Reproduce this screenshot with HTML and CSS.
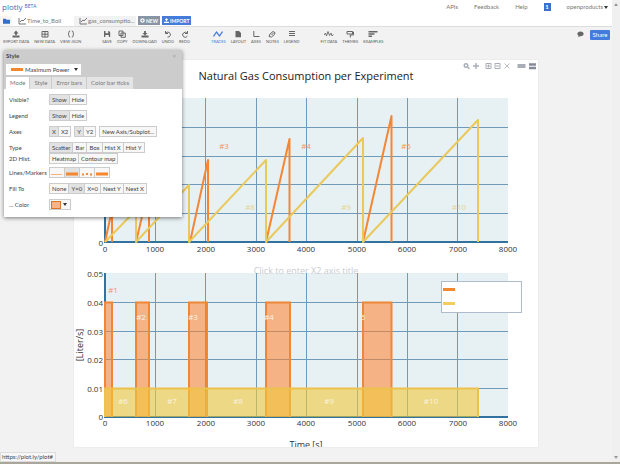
FILE: index.html
```html
<!doctype html>
<html lang="en">
<head>
    <meta charset="UTF-8">
    <meta name="viewport" content="width=device-width, initial-scale=1.0">
    <title>plotly</title>
    <link rel="stylesheet" href="styles.css">
</head>
<body>
<div class="screen">
<div class="app">
    <header class="header">
        <a class="logo" href="#">plotly<span class="beta">BETA</span></a>
        <nav class="nav">
            <a href="#">APIs</a>
            <a href="#">Feedback</a>
            <a href="#">Help</a>
            <a class="badge" href="#">1</a>
            <a class="user" href="#">openproducts<span class="caret"></span></a>
        </nav>
    </header>
    <div class="tabs">
        <button class="folder" aria-label="Files"><svg viewBox="0 0 8 6"><path d="M0 0.5h3l1 1h4V6H0z" fill="#2f6fd0"/></svg></button>
        <button class="tab"><svg viewBox="0 0 8 8"><path d="M1 1v6h7M2 5l2-2 1 1 3-3" fill="none" stroke="#777"/></svg>Time_to_Boil</button>
        <button class="tab active"><svg viewBox="0 0 8 8"><path d="M1 1v6h7M2 5l2-2 1 1 3-3" fill="none" stroke="#777"/></svg>gas_consumptio...</button>
        <button class="top-btn grey"><svg viewBox="0 0 6 6"><path d="M3 0a3 3 0 1 0 .01 0zM1.5 3h3M3 1.5v3" fill="#fff" stroke="#8a93a3" stroke-width=".8"/></svg>NEW</button>
        <button class="top-btn"><svg viewBox="0 0 6 6"><path d="M3 0l2 2.4H3.8V4H2.2V2.4H1zM0 4.5h6V6H0z" fill="#fff"/></svg>IMPORT</button>
    </div>
    <div class="toolbar">
        <div class="group">
            <button><svg viewBox="0 0 8 8"><path d="M4 .5L6.5 3.5h-1.6V5H3.1V3.5H1.5zM.5 5.5h7v2h-7z" fill="#666"/></svg>IMPORT DATA</button>
            <button><svg viewBox="0 0 8 8"><path d="M1 1.5h6v5.5H1zM1 4.2h6M4 1.5V7" fill="none" stroke="#666"/></svg>NEW DATA</button>
            <button><svg viewBox="0 0 8 8"><path d="M3.2 1Q1.7 1 1.8 2.5T1 4q.9 0 .8 1.5T3.2 7M4.8 1q1.5 0 1.4 1.5T7 4q-.9 0-.8 1.5T4.8 7" fill="none" stroke="#666"/></svg>VIEW JSON</button>
        </div>
        <div class="group">
            <button><svg viewBox="0 0 8 8"><path d="M1 1h5l1.2 1.2V7H1zM2.5 1v2.3h2.7V1M2.3 5h3.5v2H2.3z" fill="#666" fill-rule="evenodd"/></svg>SAVE</button>
            <button><svg viewBox="0 0 8 8"><path d="M1 1h4v4.5H1zM3 3h4.3v4.3H3z" fill="#f2f2f2" stroke="#666"/></svg>COPY</button>
            <button><svg viewBox="0 0 8 8"><path d="M3.1 1h1.8v2h1.6L4 5.6 1.5 3h1.6zM.5 5.5h7v2h-7z" fill="#666"/></svg>DOWNLOAD</button>
            <button><svg viewBox="0 0 8 8"><path d="M1.5 1v2.5h2.5M1.8 3.3a2.5 2.5 0 1 1 1.7 3.8" fill="none" stroke="#666"/></svg>UNDO</button>
            <button><svg viewBox="0 0 8 8"><path d="M6.5 1v2.5H4M6.2 3.3A2.5 2.5 0 1 0 6.4 6" fill="none" stroke="#666"/></svg>REDO</button>
        </div>
        <div class="group">
            <button class="on"><svg viewBox="0 0 10 8"><path d="M.5 6.5L3.5 2l3 4 3-4.5" fill="none" stroke="#447bdc" stroke-width="1.3"/></svg>TRACES</button>
            <button><svg viewBox="0 0 8 8"><path d="M1.5 1H5l2 2v4.2H1.5z" fill="#666"/></svg>LAYOUT</button>
            <button><svg viewBox="0 0 8 8"><path d="M1.8 1v5.5h5.7" fill="none" stroke="#666"/></svg>AXES</button>
            <button><svg viewBox="0 0 8 8"><path d="M1 6.5L2 4l3-2.5 2 1.2-.5 1.8-3 2.5zM3.5 5l2-2" fill="none" stroke="#666"/></svg>NOTES</button>
            <button><svg viewBox="0 0 8 8"><path d="M1 1.5h6M1 3.5h6M1 5.500h6" stroke="#666"/></svg>LEGEND</button>
        </div>
        <div class="group">
            <button><svg viewBox="0 0 10 8"><path d="M0 5l1.5-2 1 3 1.5-4.5 1.5 4L7 3l1 3 1.5-1.5" fill="none" stroke="#666" stroke-width=".9"/></svg>FIT DATA</button>
            <button><svg viewBox="0 0 8 8"><path d="M1 1.5h5.5V4H1zM6.5 2h1v3H4.3v2.5" fill="none" stroke="#666"/></svg>THEMES</button>
            <button><svg viewBox="0 0 10 8"><path d="M.5 1.7h9M.5 4h6M.5 6.3h3.5" stroke="#666" stroke-width="1.4"/></svg>EXAMPLES</button>
        </div>
        <div class="share">
            <svg viewBox="0 0 8 8"><path d="M4 1C1.8 1 .4 2.2.4 3.8c0 1 .6 1.8 1.5 2.3L1.5 7.7l2-1.2H4c2.2 0 3.6-1.2 3.6-2.7S6.2 1 4 1z" fill="#666"/></svg>
            <button class="share-btn">Share</button>
        </div>
    </div>

    <main class="workspace">
        <div class="plot">
            <svg viewBox="0 0 464 387">
                <!-- modebar -->
                <g fill="none" stroke="#a9adb8">
                    <circle cx="392" cy="5.5" r="1.8" stroke-width="1.4"/>
                    <path d="M393.500 7l2 2" stroke-width="1.3"/>
                    <path d="M402 3v6M399 6h6" stroke-width="1.4"/>
                    <path d="M412 3.5h5v5h-5zM413 6h3M414.5 4.5v3M421 3.5h5v5h-5zM422 6h3"/>
                    <path d="M430.5 3.5l5 5M435.5 3.5l-5 5" stroke-width=".8"/>
                    <path d="M443.5 6h8" stroke-width="4"/>
                    <path d="M455 4.5h7M455 8h7" stroke="#858b99" stroke-width="2.5"/>
                </g>
                <text class="title" x="232" y="20">Natural Gas Consumption per Experiment</text>

                <!-- upper plot -->
                <rect class="bg" x="31" y="38" width="403" height="144"/>
                <path class="grid" d="M81.5 38v144M131.5 38v144M182.5 38v144M232.5 38v144M283.5 38v144M333.5 38v144M383.5 38v144M31 67.5h403M31 96.5h403M31 124.5h403M31 153.5h403"/>
                <path class="axis" d="M31 38v144M30 182h404"/>
                <path class="orange" d="M31 182l7-32v32M62 182l13-55v55M116 182l18-82v82M192 182l23.5-103v103M289 182l28.500-126v126"/>
                <path class="yellow" d="M31 182l31-32v32l53-57v57l77-82v82l97-104v104l115-122v122"/>
                <g class="mark-orange">
                    <text x="150" y="89">#3</text>
                    <text x="232" y="89">#4</text>
                    <text x="332" y="89">#5</text>
                </g>
                <g class="mark-yellow">
                    <text x="176" y="150">#8</text>
                    <text x="272" y="150">#9</text>
                    <text x="385" y="150">#10</text>
                </g>
                <g class="tick">
                    <text x="31" y="192">0</text>
                    <text x="81" y="192">1000</text>
                    <text x="132" y="192">2000</text>
                    <text x="182" y="192">3000</text>
                    <text x="232" y="192">4000</text>
                    <text x="283" y="192">5000</text>
                    <text x="333" y="192">6000</text>
                    <text x="384" y="192">7000</text>
                    <text x="434" y="192">8000</text>
                </g>
                <text class="tick-y" x="29" y="186">0</text>

                <!-- lower plot -->
                <rect class="bg" x="31" y="213" width="403" height="144"/>
                <text class="hint" x="232" y="214">Click to enter X2 axis title</text>
                <path class="grid" d="M81.5 213v144M131.5 213v144M182.5 213v144M232.5 213v144M283.5 213v144M333.5 213v144M383.5 213v144M31 242.5h403M31 271.5h403M31 299.5h403M31 328.5h403"/>
                <path class="axis" d="M31 213v144M30 357h404"/>
                <path class="bar-orange" d="M31 357V242.5h7V357M62 357V242.5h13V357M115 357V242.5h18V357M192 357V242.5h24V357M289 357V242.5h28.5V357"/>
                <path class="bar-yellow" d="M31 357V328.5h373V357"/>
                <g class="mark-orange"><text x="39" y="233">#1</text></g>
                <g class="mark-white">
                    <text x="67" y="260">#2</text>
                    <text x="119" y="260">#3</text>
                    <text x="195" y="260">#4</text>
                    <text x="289" y="260">5</text>
                    <text x="49" y="344">#6</text>
                    <text x="98" y="344">#7</text>
                    <text x="164" y="344">#8</text>
                    <text x="255" y="344">#9</text>
                    <text x="357" y="344">#10</text>
                </g>
                <g class="tick-y">
                    <text x="29" y="217">0.05</text>
                    <text x="29" y="246">0.04</text>
                    <text x="29" y="275">0.03</text>
                    <text x="29" y="303">0.02</text>
                    <text x="29" y="332">0.01</text>
                    <text x="29" y="360">0</text>
                </g>
                <g class="tick">
                    <text x="31" y="366">0</text>
                    <text x="81" y="366">1000</text>
                    <text x="132" y="366">2000</text>
                    <text x="182" y="366">3000</text>
                    <text x="232" y="366">4000</text>
                    <text x="283" y="366">5000</text>
                    <text x="333" y="366">6000</text>
                    <text x="384" y="366">7000</text>
                    <text x="434" y="366">8000</text>
                </g>
                <text class="axis-title" transform="translate(9 285) rotate(-90)">[Liter/s]</text>
                <text class="axis-title" x="232" y="388">Time [s]</text>

                <!-- legend -->
                <rect x="367.5" y="221.5" width="80" height="31" fill="#fff" stroke="#aebccb"/>
                <path d="M369 229.5h12" stroke="#f5872f" stroke-width="3"/>
                <path d="M369 243.5h12" stroke="#f3cd5c" stroke-width="3"/>
            </svg>
        </div>
    </main>

    <section class="panel">
        <div class="panel-head">
            <div class="panel-title">Style<button class="close" aria-label="Close">×</button></div>
            <button class="trace"><span class="swatch"></span>Maximum Power<span class="caret"></span></button>
            <div class="panel-tabs">
                <button class="active">Mode</button>
                <button>Style</button>
                <button>Error bars</button>
                <button>Color bar ticks</button>
            </div>
        </div>
        <div class="panel-body">
            <div class="row"><span class="label">Visible?</span><div class="btns"><button class="on">Show</button><button>Hide</button></div></div>
            <div class="row"><span class="label">Legend</span><div class="btns"><button class="on">Show</button><button>Hide</button></div></div>
            <div class="row"><span class="label">Axes</span>
                <div class="btns"><button class="on">X</button><button>X2</button></div>
                <div class="btns"><button class="on">Y</button><button>Y2</button></div>
                <div class="btns"><button>New Axis/Subplot...</button></div>
            </div>
            <div class="row tight"><span class="label">Type</span><div class="btns"><button class="on">Scatter</button><button>Bar</button><button>Box</button><button>Hist X</button><button>Hist Y</button></div></div>
            <div class="row snug"><span class="label">2D Hist.</span><div class="btns"><button>Heatmap</button><button>Contour map</button></div></div>
            <div class="row"><span class="label">Lines/Markers</span>
                <div class="btns lines">
                    <button aria-label="Lines"><svg viewBox="0 0 12 6"><path d="M0 4.5h11" stroke="#f9b27a"/></svg></button>
                    <button class="on" aria-label="Thick lines"><svg viewBox="0 0 12 6"><path d="M0 4h12" stroke="#f5872f" stroke-width="3"/></svg></button>
                    <button aria-label="Markers"><svg viewBox="0 0 12 6"><path d="M1 4.5h2M5 4h2M9 4.5h2" stroke="#f5872f" stroke-width="2"/></svg></button>
                    <button aria-label="Lines and markers"><svg viewBox="0 0 12 6"><path d="M0 4h12" stroke="#f5872f" stroke-width="3"/></svg></button>
                </div>
            </div>
            <div class="row"><span class="label">Fill To</span><div class="btns"><button>None</button><button class="on">Y=0</button><button>X=0</button><button>Next Y</button><button>Next X</button></div></div>
            <div class="row"><span class="label">... Color</span><div class="btns"><button class="color" aria-label="Fill color"><span class="chip"></span><span class="caret"></span></button></div></div>
        </div>
    </section>
    <div class="status">https://plot.ly/plot#</div>
</div>
<div class="scroll"><span></span><span class="down"></span></div>
</div>
</body>
</html>
```
FILE: styles.css
```css
*{
    box-sizing: border-box;
}
body{
    margin: 0;
    background: #f2f2f3;
    font: 6px/8px Lato, "Open Sans", sans-serif;
    color: #444;
}
button{
    margin: 0;
    padding: 0;
    border: 0;
    background: none;
    font: inherit;
    color: inherit;
}
a{
    color: inherit;
    text-decoration: none;
}
svg{
    display: block;
}
.screen{
    display: flex;
    min-height: 100vh;
    border-bottom: 2px solid #a9a79c;
}
.app{
    position: relative;
    flex: 1;
    min-width: 0;
}
.scroll{
    display: flex;
    flex-direction: column;
    justify-content: space-between;
    align-items: center;
    width: 8px;
    padding: 3px 0;
    background: #f0f0f0;
}
.scroll span{
    border: 2px solid transparent;
    border-top: 0;
    border-bottom: 3px solid #999;
}
.scroll .down{
    transform: rotate(180deg);
}
.caret{
    display: inline-block;
    margin-left: 3px;
    border: 2px solid transparent;
    border-bottom: 0;
    border-top: 3px solid #333;
}

/* header */
.header{
    display: flex;
    justify-content: space-between;
    height: 16px;
    padding: 0 4px 0 2px;
    background: #fff;
}
.logo{
    display: flex;
    gap: 2px;
    font: 8px/13px "Open Sans", sans-serif;
    color: #3a6cb8;
}
.beta{
    font-size: 5px;
    line-height: 12px;
}
.nav{
    display: flex;
    align-items: center;
    gap: 16px;
    height: 14px;
    color: #777;
}
.nav .badge{
    width: 7px;
    background: #3b6fc9;
    color: #fff;
    text-align: center;
    font-weight: bold;
}
.nav .caret{
    margin-left: 1px;
}
.tabs{
    display: flex;
    height: 10px;
    background: #fff;
}
.folder{
    width: 12px;
    padding-left: 3px;
    background: #f5f5f5;
}
.folder svg{
    width: 7px;
    height: 6px;
}
.tab{
    display: flex;
    align-items: center;
    gap: 1px;
    width: 62px;
    padding-left: 6px;
    color: #777;
}
.tab.active{
    background: #f2f2f3;
    padding-left: 5px;
}
.tab svg{
    width: 8px;
    height: 8px;
}
.top-btn{
    display: flex;
    align-items: center;
    gap: 1px;
    height: 9px;
    margin-left: 2px;
    padding: 0 2px;
    background: #447bdc;
    color: #fff;
    font-size: 5px;
    font-weight: bold;
}
.top-btn.grey{
    background: #8a93a3;
}
.top-btn svg{
    width: 5px;
    height: 5px;
}

/* toolbar */
.toolbar{
    display: flex;
    gap: 21px;
    height: 24px;
    padding: 3px 2px 0 3px;
    border-top: 1px solid #ddd;
}
.group{
    display: flex;
    align-items: flex-start;
    gap: 5px;
}
.group button{
    display: flex;
    flex-direction: column;
    align-items: center;
    font-size: 4px;
    line-height: 6px;
    gap: 1px;
    color: #555;
}
.group svg{
    height: 8px;
}
.group .on{
    color: #447bdc;
}
.share{
    display: flex;
    align-items: flex-start;
    gap: 6px;
    margin-left: auto;
}
.share svg{
    width: 7px;
    height: 8px;
}
.share-btn{
    height: 10px;
    width: 20px;
    border-radius: 1px;
    background: #447bdc;
    color: #fff;
}

/* plot */
.workspace{
    padding: 10px 74px 15px;
}
.plot{
    background: #fff;
    box-shadow: 0 0 1px #ccc;
    overflow: hidden;
    font-family: "Open Sans", sans-serif;
}
.plot svg{
    width: 100%;
}
.plot text{
    text-anchor: middle;
    fill: #333;
}
.plot .title{
    font-size: 11px;
    fill: #222;
}
.plot .tick, .plot .tick-y{
    font-size: 8px;
}
.plot .tick-y, .plot .tick-y text{
    text-anchor: end;
}
.plot .axis-title{
    font-size: 9px;
}
.plot .hint{
    font-size: 9px;
    fill: #c9ccd0;
}
.mark-orange, .mark-yellow, .mark-white{
    font-size: 8px;
}
.plot .mark-orange text{
    fill: #f5925c;
}
.plot .mark-yellow text{
    fill: #e6d68e;
}
.plot .mark-white text{
    fill: #fbf3e4;
}
.bg{
    fill: #e7f0f3;
}
.grid{
    fill: none;
    stroke: #6f9aba;
}
.axis{
    fill: none;
    stroke: #31729f;
    stroke-width: 2;
}
.orange, .yellow{
    fill: none;
    stroke: #f58634;
    stroke-width: 2;
    stroke-linejoin: round;
}
.yellow{
    stroke: #eac95c;
}
.bar-orange{
    fill: rgba(255,127,42,.55);
    stroke: #ef8737;
    stroke-width: 2;
}
.bar-yellow{
    fill: rgba(240,200,60,.6);
    stroke: #ecc14d;
    stroke-width: 2;
}

/* style panel, floats over the plot */
.panel{
    position: absolute;
    left: 4px;
    top: 50px;
    width: 178px;
    background: #fff;
    box-shadow: 0 1px 4px rgba(0,0,0,.5);
}
.panel-head{
    background: #ccc;
    padding: 2px 2px 0;
}
.panel-title{
    display: flex;
    justify-content: space-between;
    padding: 0 4px 0 0;
    font-weight: bold;
}
.close{
    color: #aaa;
}
.trace{
    display: flex;
    align-items: center;
    height: 11px;
    margin: 4px 0 2px;
    padding: 0 3px 0 5px;
    background: #fff;
}
.trace .caret{
    margin-left: 5px;
}
.swatch{
    width: 12px;
    height: 3px;
    margin-right: 2px;
    background: #f5872f;
}
.panel-tabs{
    display: flex;
    gap: 1px;
}
.panel-tabs button{
    height: 12px;
    padding: 0 4px;
    background: #e4e4e4;
    color: #777;
}
.panel-tabs button.active{
    background: #fff;
}
.panel-body{
    padding: 5px 5px 7px;
}
.row{
    display: flex;
    align-items: center;
    gap: 3px;
    margin-bottom: 5px;
}
.row.snug{
    margin-bottom: 3px;
}
.row.tight, .row:last-child{
    margin-bottom: 0;
}
.label{
    width: 37px;
    white-space: nowrap;
}
.btns{
    display: flex;
    border: 1px solid #ccc;
}
.btns button{
    height: 9px;
    padding: 0 2px;
    background: #f7f7f7;
}
.btns button + button{
    border-left: 1px solid #ccc;
}
.btns .on{
    background: #e2e2e2;
}
.lines svg{
    width: 12px;
    height: 6px;
}
.lines button{
    padding: 0 1px;
}
.btns .color{
    display: flex;
    align-items: center;
    padding: 0 3px 0 1px;
}
.chip{
    width: 10px;
    height: 8px;
    border: 1px solid #d9742b;
    background: #f7b488;
}
.color .caret{
    margin-left: 2px;
}

/* link target shown by the browser */
.status{
    position: absolute;
    left: 0;
    bottom: 0;
    padding: 0 2px 0 1px;
    border: 1px solid #ddd;
    background: #f7f7f7;
}
```
